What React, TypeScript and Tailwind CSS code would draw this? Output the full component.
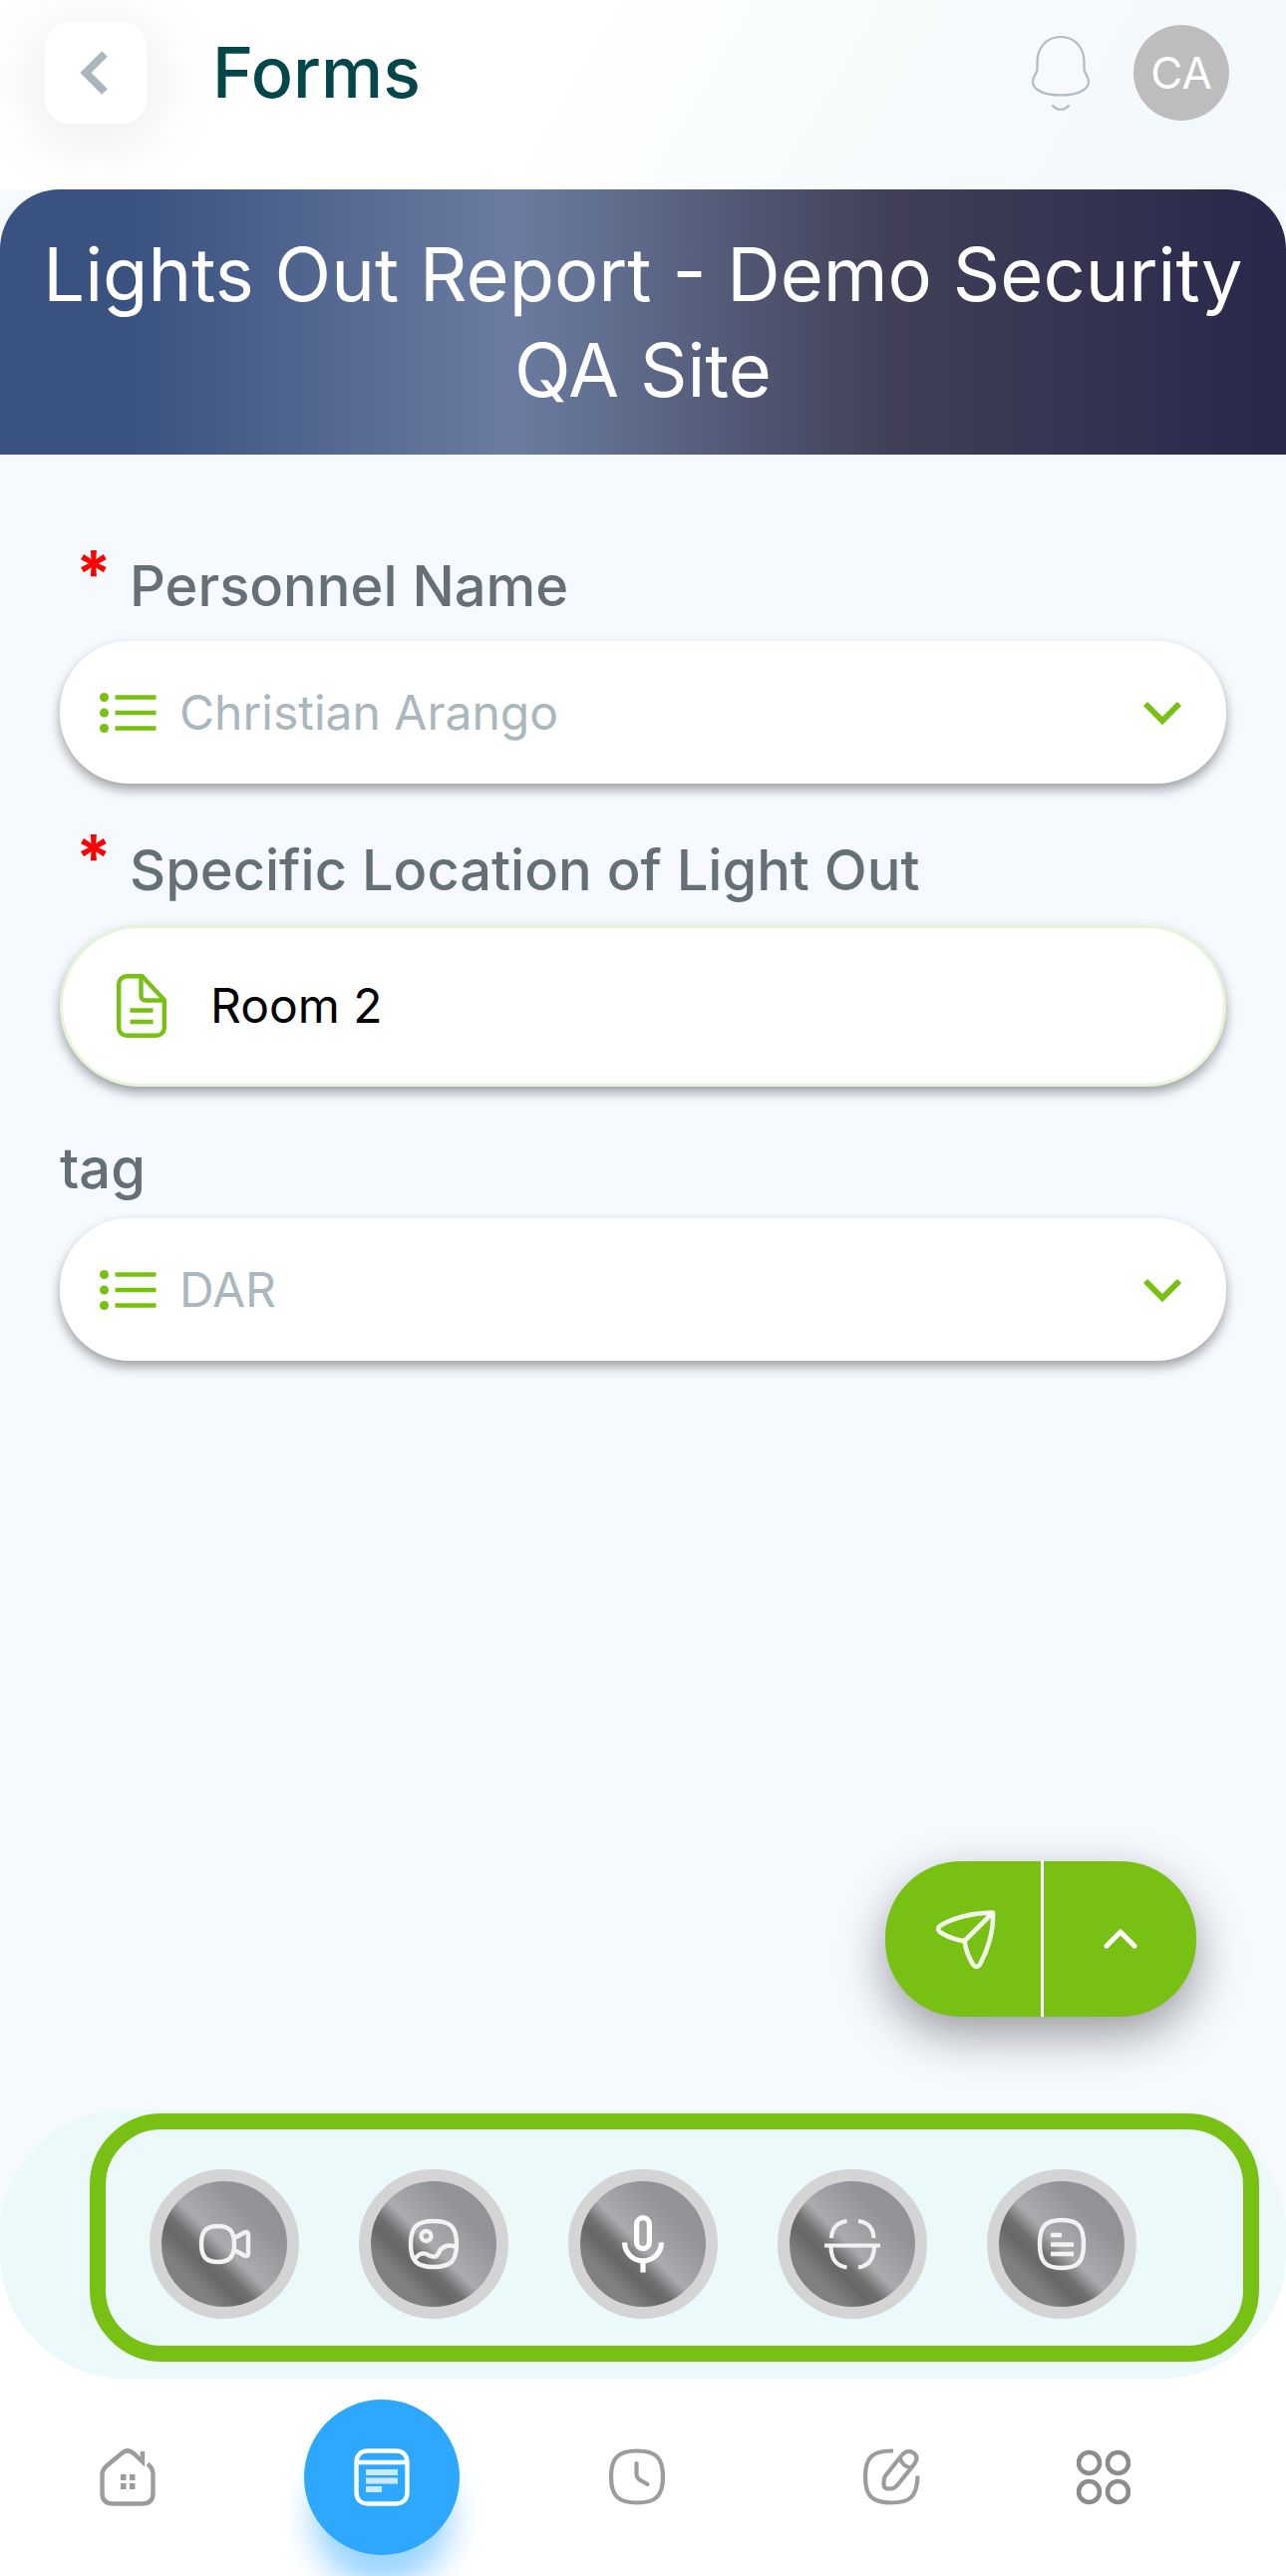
import { useState, ReactNode } from 'react';

type FieldProps = { id: string; label: string; required?: boolean; children: ReactNode };

const inputClass = 'w-full appearance-none bg-transparent text-[48px] leading-[60px] outline-none';

export default function App() {
  const [person, setPerson] = useState('Christian Arango');
  const [location, setLocation] = useState('Room 2');
  const [tag, setTag] = useState('DAR');

  return (
    <div className="flex min-h-screen flex-col overflow-hidden bg-[#f6f9fe] font-['Inter',sans-serif]">
      <header className="flex items-center bg-[linear-gradient(120deg,#fff_40%,#f8fcfd_60%,#f2f7fa_100%)] pt-[22px] pr-[57px] pb-[66px] pl-[45px]">
        <button aria-label="Back" className="flex h-[102px] w-[102px] items-center justify-center rounded-[24px] bg-white pr-1 shadow-[0_10px_80px_rgba(0,0,0,0.1)]">
          <svg viewBox="0 0 28 44" className="h-[44px] w-[28px]" fill="none" stroke="#a9b6bc" strokeWidth="8">
            <path d="M25 3 6 22l19 19" />
          </svg>
        </button>
        <h1 className="ml-[66px] flex-1 text-[70px] leading-[88px] font-medium text-[#04474b]">Forms</h1>
        <button aria-label="Notifications" className="mr-[43px]">
          <BellIcon />
        </button>
        <div className="flex h-[96px] w-[96px] items-center justify-center rounded-full bg-[#bdbdbd] text-[44px] text-white">CA</div>
      </header>

      {/* Form title */}
      <div className="rounded-t-[60px] bg-[linear-gradient(90deg,#3a5280_10%,#6b7ca0_40%,#5b6685_51%,#414058_69%,#29274a_100%)] px-[20px] py-[37px]">
        <h2 className="text-center text-[74px] leading-[96px] text-white">Lights Out Report - Demo Security QA Site</h2>
      </div>

      <main className="flex flex-1 flex-col px-[60px] pt-[96px] pb-[93px]">
        <div className="flex flex-col gap-[51px]">
          <Field id="personnel" label="Personnel Name" required>
            <SelectBox id="personnel" value={person} options={['Christian Arango']} onChange={setPerson} />
          </Field>

          <Field id="location" label="Specific Location of Light Out" required>
            <div className="flex h-[162px] items-center rounded-[80px] border-[3px] border-[#e6f4d8] bg-white pr-[40px] pl-[54px] shadow-[0_6px_12px_rgba(0,0,0,0.36)]">
              <FileIcon />
              <input
                id="location"
                type="text"
                value={location}
                onChange={(e) => setLocation(e.target.value)}
                className={`${inputClass} ml-[44px] text-black`}
              />
            </div>
          </Field>

          <Field id="tag" label="tag">
            <SelectBox id="tag" value={tag} options={['DAR']} onChange={setTag} />
          </Field>
        </div>

        {/* Submit + more actions */}
        <div className="mt-auto mr-[30px] flex h-[156px] w-[312px] self-end rounded-[76px] bg-[#78c114] shadow-[0_18px_48px_rgba(0,0,0,0.38)]">
          <button aria-label="Send" className="flex w-[159px] items-center justify-center border-r-[3px] border-white pl-[6px]">
            <SendIcon />
          </button>
          <button aria-label="More actions" className="flex flex-1 items-center justify-center">
            <svg viewBox="0 0 34 20" className="h-[20px] w-[34px]" fill="none" stroke="#fff" strokeWidth="5" strokeLinecap="round" strokeLinejoin="round">
              <path d="M3 17 17 3l14 14" />
            </svg>
          </button>
        </div>
      </main>

      {/* Attachments */}
      <div className="bg-linear-to-b from-[#f6f9fe] from-50% to-white to-50%">
        <div className="rounded-[125px] bg-[#ebf9fa] pt-[4px] pr-[27px] pb-[17px] pl-[90px]">
          <div className="flex gap-[60px] rounded-[72px] border-[16px] border-[#78c114] px-[44px] pt-[40px] pb-[27px]">
            <RoundBtn label="Video"><VideoIcon /></RoundBtn>
            <RoundBtn label="Photo"><PhotoIcon /></RoundBtn>
            <RoundBtn label="Audio"><MicIcon /></RoundBtn>
            <RoundBtn label="Scan"><ScanIcon /></RoundBtn>
            <RoundBtn label="Note"><NoteIcon /></RoundBtn>
          </div>
        </div>
      </div>

      <nav className="grid grid-cols-[3fr_3fr_3fr_3fr_2fr] items-center justify-items-center bg-white pt-[21px] pr-[98px] pb-[21px]">
        <a href="#home" aria-label="Home"><HomeIcon /></a>
        <a href="#forms" aria-label="Forms" className="flex h-[156px] w-[156px] items-center justify-center rounded-full bg-[#2ea8ff] shadow-[0_40px_32px_-8px_rgba(46,168,255,0.48)]">
          <FormsIcon />
        </a>
        <a href="#history" aria-label="History"><ClockIcon /></a>
        <a href="#edit" aria-label="Edit"><EditIcon /></a>
        <a href="#more" aria-label="More"><GridIcon /></a>
      </nav>
    </div>
  );
}

function Field({ id, label, required, children }: FieldProps) {
  return (
    <div>
      <label htmlFor={id} className={`mb-[19px] flex text-[56px] font-medium text-[#647073] ${required ? 'h-[72px] leading-[72px]' : 'h-[62px] leading-[62px]'}`}>
        {required && <span className="w-[70px] pl-[16px] text-[64px] leading-[48px] font-bold text-[#ff0000]">*</span>}
        {label}
      </label>
      {children}
    </div>
  );
}

function SelectBox({ id, value, options, onChange }: { id: string; value: string; options: string[]; onChange: (v: string) => void }) {
  return (
    <div className="flex h-[143px] items-center rounded-[70px] bg-white pr-[44px] pl-[40px] shadow-[0_6px_12px_rgba(0,0,0,0.36)]">
      <svg viewBox="0 0 58 40" className="h-[40px] w-[58px] shrink-0" fill="#78c114">
        <circle cx="4.500" cy="4.5" r="4.5" />
        <circle cx="4.500" cy="20" r="4.5" />
        <circle cx="4.500" cy="35.5" r="4.5" />
        <path d="M15.500 2.200h41v4.600h-41zM15.500 17.700h41v4.600h-41zM15.500 33.200h41v4.600h-41z" />
      </svg>
      <select id={id} value={value} onChange={(e) => onChange(e.target.value)} className={`${inputClass} ml-[22px] text-[#aab7bd]`}>
        {options.map((o) => (
          <option key={o}>{o}</option>
        ))}
      </select>
      <svg viewBox="0 0 40 24" className="pointer-events-none h-[24px] w-[40px] shrink-0" fill="none" stroke="#78c114" strokeWidth="6">
        <path d="m3 3 17 17L37 3" />
      </svg>
    </div>
  );
}

function RoundBtn({ label, children }: { label: string; children: ReactNode }) {
  return (
    <button
      aria-label={label}
      className="flex h-[150px] w-[150px] items-center justify-center rounded-full border-[12px] border-[#d4d4d4] bg-[linear-gradient(45deg,#808080_27%,#676767_36%,#6f6f70_41%,#aaabaf_49%,#929397_70%)] bg-origin-border"
    >
      {children}
    </button>
  );
}

function BellIcon() {
  return (
    <svg viewBox="0 0 60 76" className="h-[76px] w-[60px]" fill="none" stroke="#b0bcc3" strokeWidth="2.2" strokeLinecap="round">
      <path d="M30 2C15 2 6.500 14 6.500 27v7c0 5-4.500 7-4.500 13 0 9 13 13.500 28 13.500S58 56 58 47c0-6-4.500-8-4.500-13v-7C53.500 14 45 2 30 2Z" />
      <path d="M22 71c4 5 12 5 16 0" />
    </svg>
  );
}

function FileIcon() {
  return (
    <svg viewBox="0 0 50 64" className="h-[64px] w-[50px] shrink-0" fill="none" stroke="#78c114" strokeWidth="4.4">
      <path d="M10 2.200h15.500L47.800 26v28a7.800 7.800 0 0 1-7.800 7.800H10A7.800 7.800 0 0 1 2.200 54V10A7.800 7.800 0 0 1 10 2.200Z" />
      <path d="M24.500 3v19c0 3 2 4.500 4.500 4.500h18" />
      <path d="M13.500 36.500h23M13.500 48h23" />
    </svg>
  );
}

function SendIcon() {
  return (
    <svg viewBox="0 0 60 60" className="h-[60px] w-[60px]" fill="none" stroke="#f1f8e7" strokeWidth="4.600" strokeLinejoin="round" strokeLinecap="round">
      <path d="M57 3.500C37 3.500 16 9 4.500 16.500c-3 2-3 5 0 7C11 27.500 20 31 28.500 32 29.500 40 33 49 37 55.500c2 3 5 3 7 0C51 43 58 23 57 3.500Z" />
      <path d="M28.500 32 55 5.500" />
      <circle cx="55" cy="5.500" r="3.500" fill="#fff" stroke="none" />
    </svg>
  );
}

function VideoIcon() {
  return (
    <svg viewBox="0 0 54 42" className="h-[42px] w-[54px]" fill="none" stroke="#f2f2f2" strokeWidth="4.400" strokeLinejoin="round">
      <path d="M20.500 3c11.500 0 16.500 5 16.500 18s-5 18-16.500 18S4 34 4 21 9 3 20.500 3Z" />
      <path d="M38 14.500 47 9.500c2.500-1.200 4-.5 4 2v19c0 2.500-1.500 3.200-4 2L38 27.500" />
    </svg>
  );
}

function PhotoIcon() {
  return (
    <svg viewBox="0 0 52 52" className="h-[52px] w-[52px]" fill="none" stroke="#f2f2f2" strokeWidth="4.400" strokeLinejoin="round">
      <path d="M26 3c17 0 23 6 23 23s-6 23-23 23S3 43 3 26 9 3 26 3Z" />
      <circle cx="18.500" cy="18" r="5" />
      <path d="M6.500 43c3-7 9-10 15-5.500 6 2.500 8 1 10-3.500 2-5 8-8.500 17-5" />
    </svg>
  );
}

function MicIcon() {
  return (
    <svg viewBox="0 0 42 58" className="h-[58px] w-[42px]" fill="none" stroke="#fff" strokeWidth="5.200">
      <rect x="14.600" y="2.600" width="12.800" height="31" rx="6.400" />
      <path d="M2.600 27.500a18.400 18.400 0 0 0 36.800 0M21 46v11.500" />
    </svg>
  );
}

function ScanIcon() {
  return (
    <svg viewBox="0 0 56 52" className="h-[52px] w-[56px]" fill="none" stroke="#f2f2f2" strokeWidth="4.200">
      <path d="M22.500 3C12 4.500 7.500 10 7 20M34 3c10.500 1.500 15 7 15.500 17M6.500 29C7 42 12 48 22.500 49.500M50 29C49.500 42 44 48 34 49.500M0 27.500h56" />
    </svg>
  );
}

function NoteIcon() {
  return (
    <svg viewBox="0 0 50 54" className="h-[54px] w-[50px]" fill="none" stroke="#f2f2f2" strokeWidth="4.400">
      <path d="M25 3c17 0 22 7 22 24s-5 24-22 24S3 44 3 27 8 3 25 3Z" />
      <path d="M14 18h11M14 27.500h23M14 37h23" />
    </svg>
  );
}

function HomeIcon() {
  return (
    <svg viewBox="0 0 56 58" className="h-[58px] w-[56px]" fill="none" stroke="#9c9c9c" strokeWidth="4.400">
      <path d="M43 3v10.500L34 5c-4-3.500-8-3.500-12 0L7 17.500c-3 2.600-4.500 4.500-4.500 9V45c0 7 4 10.500 11 10.500h29c7 0 11-3.500 11-10.500V26c0-4-1-7-5.500-10.500" />
      <path d="M21 29h5.500M30 29h5.500M21 38h5.500M30 38h5.500" strokeWidth="6" />
    </svg>
  );
}

function FormsIcon() {
  return (
    <svg viewBox="0 0 56 58" className="h-[58px] w-[56px]" fill="none" stroke="#fff" strokeWidth="4.400">
      <path d="M14 2.500h28c8 0 11.500 5 11.500 12v29c0 7-3.500 12-11.500 12H14c-8 0-11.500-5-11.500-12v-29c0-7 3.500-12 11.500-12ZM3 14h50" />
      <path d="M12 24h32M12 32.500h32M12 41h16" strokeOpacity="0.75" strokeWidth="6" />
    </svg>
  );
}

function ClockIcon() {
  return (
    <svg viewBox="0 0 58 58" className="h-[58px] w-[58px]" fill="none" stroke="#9c9c9c" strokeWidth="4.200">
      <path d="M29 2.500c19 0 26 7 26 26s-7 26-26 26-26-7-26-26 7-26 26-26Z" />
      <path d="M28.500 15v10c0 4 1 5.500 4 7l7 4" strokeLinecap="round" />
    </svg>
  );
}

function EditIcon() {
  return (
    <svg viewBox="0 0 58 58" className="h-[58px] w-[58px]" fill="none" stroke="#9c9c9c" strokeWidth="4.200">
      <path d="M31 2.500C10 2 3 9 3 28.500s7 26 26 26 26-6 26.500-27" />
      <path d="M39.500 7c4-5 9-5 12.500-2s3 7 0 11L35 37c-2 2.500-4 3.500-7 3.500s-6.500.5-6.500-5c0-4 0-6 2-8.500ZM38 10c1.500 5 5 8.500 10.500 9.500" />
    </svg>
  );
}

function GridIcon() {
  return (
    <svg viewBox="0 0 54 56" className="h-[56px] w-[54px]" fill="none" stroke="#8c8c8c" strokeWidth="4.600">
      <circle cx="12.500" cy="13.500" r="10.500" />
      <circle cx="41.500" cy="13.500" r="10.500" />
      <circle cx="12.500" cy="42.500" r="10.500" />
      <circle cx="41.500" cy="42.500" r="10.500" />
    </svg>
  );
}
